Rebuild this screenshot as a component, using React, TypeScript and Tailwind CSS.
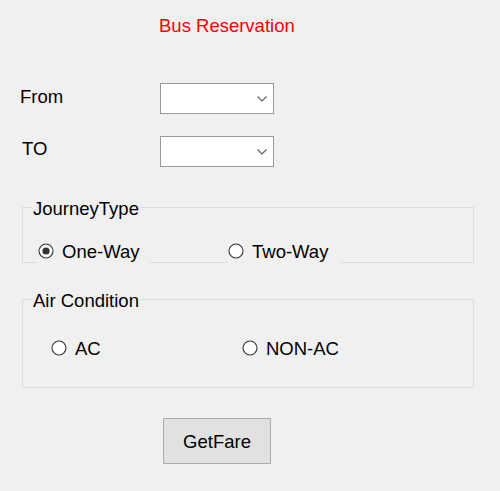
import type { ReactNode } from "react";

function Combo() {
  return (
    <div className="relative w-[114px] h-[31px] bg-white border border-[#9a9a9a] flex items-center justify-end pr-[6px]">
      <svg width="10" height="6" viewBox="0 0 10 6" className="mt-[1px]">
        <polyline points="0.5,0.5 5,5 9.5,0.5" fill="none" stroke="#606060" strokeWidth="1.2" />
      </svg>
    </div>
  );
}

function Radio({ checked, label, className }: { checked?: boolean; label: string; className: string }) {
  return (
    <label className={`flex items-start bg-[#f0f0f0] ${className}`}>
      <svg width="16" height="16" viewBox="0 0 16 16" className="shrink-0">
        <circle cx="8" cy="8" r="7" fill="#ffffff" stroke="#333333" strokeWidth="1.1" />
        {checked && <circle cx="8" cy="8" r="3.6" fill="#333333" />}
      </svg>
      <span className="ml-[8px] leading-[21px] -mt-[2px]">{label}</span>
    </label>
  );
}

function Group({ title, children, className }: { title: string; children: ReactNode; className: string }) {
  return (
    <div className={`ml-[22px] w-[452px] border border-[#dcdcdc] ${className}`}>
      <div className="-mt-[10px] ml-[9px] px-[1px] w-fit bg-[#f0f0f0] leading-[21px]">{title}</div>
      {children}
    </div>
  );
}

export default function App() {
  return (
    <div
      className="w-[500px] min-h-[491px] bg-[#f0f0f0] text-[18.5px] text-black flex flex-col"
      style={{ fontFamily: '"Liberation Sans", Arial, sans-serif' }}
    >
      <div className="pl-[159px] pt-[15px] leading-[21px] text-[#ff0000]">Bus Reservation</div>

      {/* From / To */}
      <div className="flex items-start pl-[20px] mt-[47px]">
        <div className="w-[140px] pt-[3px] leading-[21px]">From</div>
        <Combo />
      </div>
      <div className="flex items-start pl-[20px] mt-[22px]">
        <div className="w-[140px] pl-[2px] pt-[2px] leading-[21px]">TO</div>
        <Combo />
      </div>

      {/* Journey type */}
      <Group title="JourneyType" className="mt-[40px]">
        <div className="flex mt-[21px] -mb-[2px]">
          <Radio checked label="One-Way" className="ml-[15px] w-[112px] h-[24px] pt-[3px]" />
          <Radio label="Two-Way" className="ml-[78px] w-[113px] h-[24px] pt-[3px]" />
        </div>
      </Group>

      {/* Air condition */}
      <Group title="Air Condition" className="mt-[36px] h-[89px]">
        <div className="flex mt-[27px]">
          <Radio label="AC" className="ml-[28px] w-[191px] pt-[2px]" />
          <Radio label="NON-AC" className="w-[120px] pt-[2px]" />
        </div>
      </Group>

      <button className="ml-[163px] mt-[30px] w-[108px] h-[46px] bg-[#e1e1e1] border border-[#adadad] leading-[21px]">
        GetFare
      </button>
    </div>
  );
}
